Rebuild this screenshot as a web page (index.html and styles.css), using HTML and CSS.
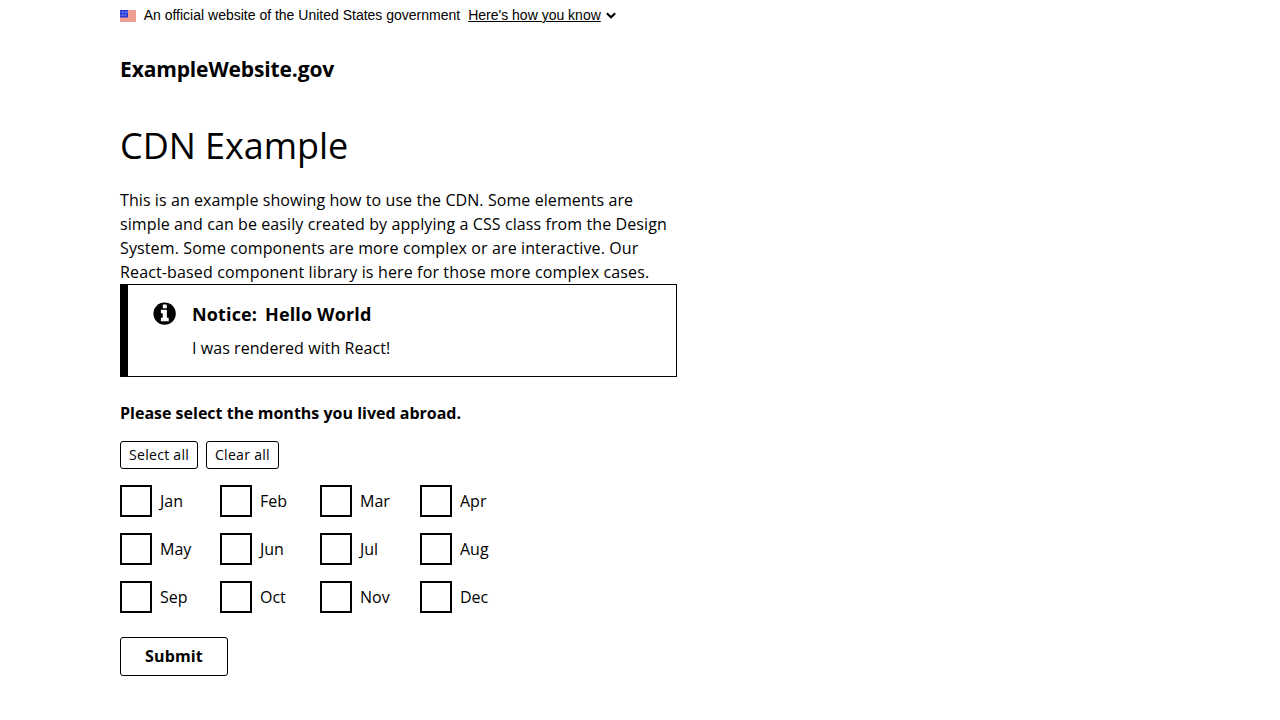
FILE: index.html
```html
<!DOCTYPE html>
<html lang="en">
<head>
<meta charset="utf-8">
<title>CDN Example</title>
<link rel="stylesheet" href="styles.css">
</head>
<body>
<header>
<div class="banner">
<svg class="flag" viewBox="0 0 16 12" width="16" height="12" aria-hidden="true"><path fill="#ef9e92" d="M0 0h16v12H0z"/><path fill="#1c2fd0" d="M0 0h8v7.500H0z"/><path d="M0 1l2 2.500M2.500 1l2 2.500M5 1l2 2.500M0 4l2 2.500M2.500 4l2 2.500M5 4l2 2.500M2.500 3l1-2M5 3l1-2M7 3l1-2M2.500 6l1-2M5 6l1-2" fill="none" stroke="#94a5f2" stroke-width=".6"/></svg>
<span class="banner-text">An official website of the United States government</span>
<a class="banner-link" href="#">Here's how you know</a>
<svg class="chevron" viewBox="0 0 10 7" width="10" height="7" aria-hidden="true"><path d="M.8 1.200L5 5.200l4.200-4" fill="none" stroke="#000" stroke-width="2.100"/></svg>
</div>
<div class="site-name">ExampleWebsite.gov</div>
</header>
<main>
<h1>CDN Example</h1>
<p class="intro"><span class="line-a">This is an example showing how to use the CDN. Some elements are</span> <span class="line-b">simple and can be easily created by applying a CSS class from the Design</span> <span class="line-c">System. Some components are more complex or are interactive. Our</span> <span class="line-d">React-based component library is here for those more complex cases.</span></p>
<section class="alert">
<svg class="info" viewBox="0 0 24 24" width="24" height="24" aria-hidden="true"><circle cx="11.600" cy="12.600" r="11.200"/><path fill="#fff" d="M9.800 3.500h4v3.700h-4zM7.900 8.800h6v8h1.800v3.500H7.900v-3.500h1.800v-4.500H7.900z"/></svg>
<div><h2><span>Notice: </span>Hello World</h2><p>I was rendered with React!</p></div>
</section>
<form>
<div class="legend">Please select the months you lived abroad.</div>
<div class="actions"><button type="button" class="btn small select">Select all</button><button type="button" class="btn small clear">Clear all</button></div>
<div class="months">
<label><input type="checkbox">Jan</label><label><input type="checkbox">Feb</label><label><input type="checkbox">Mar</label><label><input type="checkbox">Apr</label>
<label><input type="checkbox">May</label><label><input type="checkbox">Jun</label><label><input type="checkbox">Jul</label><label><input type="checkbox">Aug</label>
<label><input type="checkbox">Sep</label><label><input type="checkbox">Oct</label><label><input type="checkbox">Nov</label><label><input type="checkbox">Dec</label>
</div>
<button type="button" class="btn submit">Submit</button>
</form>
</main>
</body>
</html>
```
FILE: styles.css
```css
* { box-sizing: border-box; }
body { margin: 0; padding: 0 120px; background: #fff; color: #000; font: 16px/24px "Open Sans", sans-serif; }
h1, h2, p { margin: 0; }
.banner { display: flex; align-items: center; height: 31px; font: 14px/21px "Liberation Sans", Arial, sans-serif; }
.flag { margin: 1px 7.700px 0 0; }
.banner-text { margin-right: 8px; }
.banner-link { color: #000; text-decoration: underline; }
.chevron { margin-left: 5px; }
.site-name { margin-top: 23px; font-size: 21px; line-height: 31px; font-weight: 700; letter-spacing: -.13px; }
main { width: 557px; }
h1 { margin-top: 38px; font-size: 36px; line-height: 46px; font-weight: 400; letter-spacing: -.05px; }
.intro { margin-top: 19px; }
.line-a { letter-spacing: .08px; }
.line-b { letter-spacing: .096px; }
.line-c { letter-spacing: .12px; }
.line-d { letter-spacing: .14px; }
.alert { display: flex; gap: 15px; height: 93px; border: 1px solid #000; border-left-width: 8px; padding: 16px 16px 16px 25px; }
.alert h2 { font-size: 18px; line-height: 27px; font-weight: 700; letter-spacing: .15px; }
.alert h2 span { margin-right: 3px; }
.alert p { margin-top: 8px; letter-spacing: .06px; }
.legend { margin-top: 24px; font-weight: 700; }
.actions { display: flex; gap: 8px; margin-top: 16px; }
.btn { border: 1px solid #000; border-radius: 3px; background: #fff; color: #000; font-family: inherit; }
.small { height: 28px; padding: 0 0 0 8px; font-size: 14px; line-height: 20px; letter-spacing: .3px; text-align: left; }
.select { width: 78px; }
.clear { width: 73px; }
.months { display: grid; grid-template-columns: repeat(4, 100px); row-gap: 16px; margin-top: 16px; }
.months label { display: flex; align-items: center; gap: 8px; }
.months input { appearance: none; width: 32px; height: 32px; margin: 0; border: 2px solid #000; background: #fff; }
.submit { display: block; width: 108px; height: 39px; margin-top: 24px; padding: 0 0 2px; font-size: 16px; line-height: 24px; font-weight: 700; letter-spacing: .15px; }
```
